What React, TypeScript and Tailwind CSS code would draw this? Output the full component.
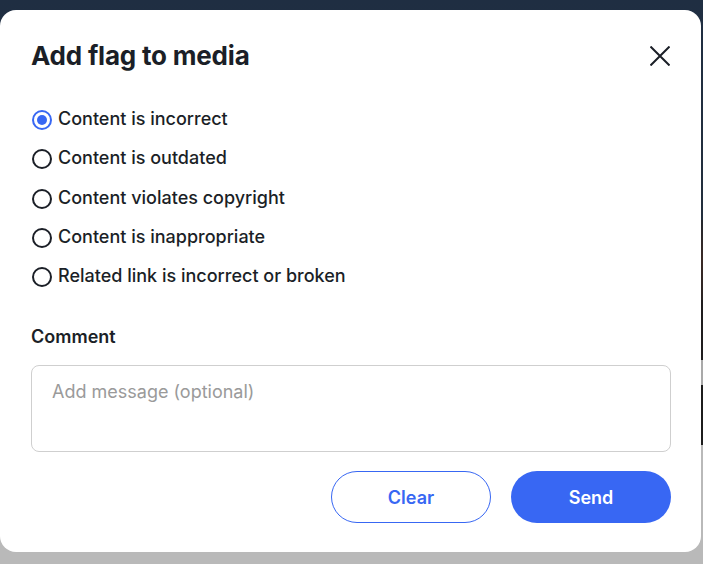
import React from "react";

const BLUE = "#3867f3";

function Radio({ checked }: { checked?: boolean }) {
  if (checked) {
    return (
      <span className="flex h-[20px] w-[20px] shrink-0 items-center justify-center rounded-full border-2 border-[#3867f3] bg-white">
        <span className="h-[10px] w-[10px] rounded-full bg-[#3867f3]" />
      </span>
    );
  }
  return <span className="h-[20px] w-[20px] shrink-0 rounded-full border-2 border-[#1b1f27] bg-white" />;
}

export default function App() {
  const options = [
    "Content is incorrect",
    "Content is outdated",
    "Content violates copyright",
    "Content is inappropriate",
    "Related link is incorrect or broken",
  ];
  return (
    <div className="relative h-[564px] w-[703px] overflow-hidden" style={{ fontFamily: "Inter, 'Noto Sans', sans-serif" }}>
      <div className="absolute inset-0 flex flex-col">
        <div className="h-[220px] bg-gradient-to-b from-[#1f2e42] to-[#232f3d]" />
        <div className="h-[80px] bg-gradient-to-b from-[#23282e] via-[#3a2a26] to-[#2a2424]" />
        <div className="h-[60px] bg-[#1f1d1e]" />
        <div className="h-[25px] bg-[#a9a9a9]" />
        <div className="h-[60px] bg-[#1c1c1c]" />
        <div className="flex-1 bg-[#b9b9b9]" />
      </div>
      <div className="relative pt-[10px]">
        <div className="flex h-[542px] w-[701px] flex-col rounded-[16px] bg-white pl-[31px] pr-[30px] text-[#1b1f27]">
          <div className="flex items-center justify-between pt-[30px]">
            <h1 className="text-[26px] font-bold leading-[32px] tracking-[-0.2px]">Add flag to media</h1>
            <svg width="20" height="20" viewBox="0 0 20 20" className="mr-[1px]" fill="none" stroke="#1b1f27" strokeWidth="2">
              <path d="M0.5 0.5 L19.5 19.5 M19.5 0.5 L0.5 19.5" />
            </svg>
          </div>
          <div className="mt-[38px] flex flex-col gap-[19.3px]">
            {options.map((o, i) => (
              <label key={o} className="ml-[1px] flex h-[20px] items-center gap-[6px] text-[18px] font-medium leading-[20px]">
                <Radio checked={i === 0} />
                <span className="-mt-[2px]">{o}</span>
              </label>
            ))}
          </div>
          <div className="mt-[39px] text-[18px] font-semibold leading-[22px]">Comment</div>
          <div className="mt-[17px] h-[87px] rounded-[8px] border border-[#cfcfcf] px-[20px] pt-[15px] text-[18px] leading-[22px] text-[#9a9a9a]">
            Add message (optional)
          </div>
          <div className="mt-[19px] flex justify-end gap-[20px]">
            <button className="h-[52px] w-[160px] rounded-full border border-[#3867f3] bg-white text-[18px] font-semibold text-[#3867f3]">
              Clear
            </button>
            <button className="h-[52px] w-[160px] rounded-full text-[18px] font-semibold text-white" style={{ background: BLUE }}>
              Send
            </button>
          </div>
        </div>
      </div>
    </div>
  );
}
